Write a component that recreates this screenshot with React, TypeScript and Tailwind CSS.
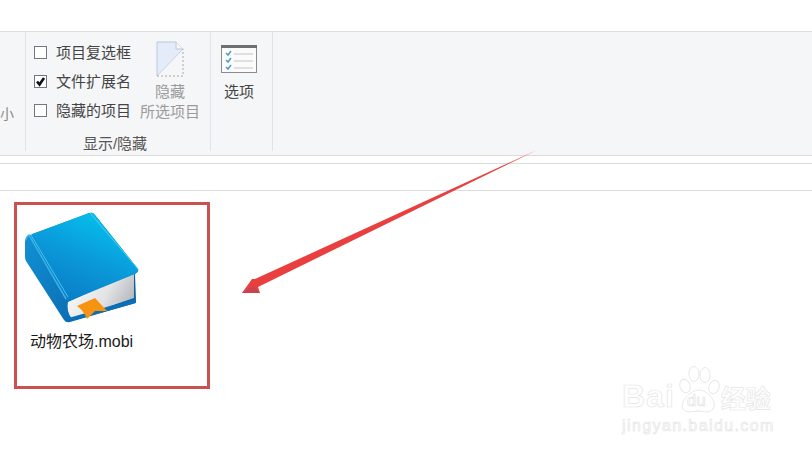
import React from 'react'

const font = { fontFamily: '"Liberation Sans", "Noto Sans CJK SC", sans-serif' }

function CheckRow({ label, checked }: { label: string; checked?: boolean }) {
  return (
    <div className="flex h-[29px] items-center">
      <span className="flex h-[13px] w-[13px] items-center justify-center border border-[#6f7780] bg-white">
        {checked && (
          <svg width="11" height="11" viewBox="0 0 11 11">
            <path d="M2 5.5 L4.5 8.5 L9 2" fill="none" stroke="#111" strokeWidth="2.6" />
          </svg>
        )}
      </span>
      <span className="ml-[9px] whitespace-nowrap text-[15px] leading-none text-[#444]">{label}</span>
    </div>
  )
}

function BookIcon() {
  return (
    <svg width="120" height="120" viewBox="0 0 120 120" className="block">
      <defs>
        <linearGradient id="cover" x1="0.75" y1="0" x2="0.25" y2="1">
          <stop offset="0" stopColor="#05c4ee" />
          <stop offset="0.5" stopColor="#0a9ada" />
          <stop offset="1" stopColor="#0a7bc6" />
        </linearGradient>
        <linearGradient id="spine" x1="0" y1="0" x2="1" y2="0.6">
          <stop offset="0" stopColor="#1296d8" />
          <stop offset="1" stopColor="#0a5fa8" />
        </linearGradient>
        <linearGradient id="pages" x1="0" y1="0.2" x2="1" y2="0.6">
          <stop offset="0" stopColor="#fbfbfb" />
          <stop offset="0.6" stopColor="#e2e3e5" />
          <stop offset="1" stopColor="#b4b6ba" />
        </linearGradient>
      </defs>
      <path d="M3 33 Q3 29 8 26 L67 4 Q71 3 73 6 L116 60 Q117 63 113 65 L114 92 Q114 94 110 95 L48 113 Q44 114 42 111 L4 52 Q3 50 3 47 Z" fill="url(#spine)" />
      <path d="M46 93 L112 63 L112 89 L50 110 Q44 102 46 93 Z" fill="url(#pages)" />
      <path d="M113 90 L114 94 L46 113 L43 110 L50 108 Z" fill="#0a6fb8" />
      <path d="M10 25 L68 4 Q71 3 73 6 L116 60 Q117 63 113 65 L47 92 Q46 93 44 90 Z" fill="url(#cover)" />
      <path d="M4 31 Q4 28 7 26 L44 90" fill="none" stroke="#35b4e6" strokeWidth="1.5" />
      <path d="M9 26 L46 88" fill="none" stroke="#4cc4ee" strokeWidth="1" />
      <path d="M68 4 L116 60" fill="none" stroke="#49d3f2" strokeWidth="1" />
      <path d="M55 97 L73 89 L85 102 L73 102 L65 110 Q62 102 55 97 Z" fill="#f7930e" />
    </svg>
  )
}

export default function App() {
  return (
    <div className="relative h-[453px] w-[812px] overflow-hidden bg-white" style={font}>
      <div className="h-[31px]" />

      {/* ribbon */}
      <div className="flex h-[125px] border-y border-[#dcdcdc] bg-[#f5f6f7]">
        <div className="flex h-[119px] w-[26px] items-end border-r border-[#e1e3e6] pb-[6px]">
          <span className="mb-[24px] text-[14px] leading-none text-[#8a8a8a]">小</span>
        </div>
        <div className="flex h-[119px] w-[185px] flex-col border-r border-[#e1e3e6]">
          <div className="flex">
            <div className="ml-[8px] mt-[6px] flex flex-col">
              <CheckRow label="项目复选框" />
              <CheckRow label="文件扩展名" checked />
              <CheckRow label="隐藏的项目" />
            </div>
            <div className="ml-[9px] mt-[9px] flex flex-col items-center">
              <svg width="28" height="36" viewBox="0 0 28 36" className="block">
                <path d="M1 1 H20 L27 8 V35 H1 Z" fill="#e3ecf8" />
                <path d="M1 35 L27 8 V35 Z" fill="#f5f6f7" />
                <path d="M1 35 V1 H20 L27 8" fill="none" stroke="#bcc8d8" />
                <path d="M1 35 L27 8" fill="none" stroke="#c8d2df" />
                <path d="M1 35 H27 V8" fill="none" stroke="#a8a8a8" strokeDasharray="2 2" />
                <path d="M20 1 V8 H27" fill="#f4f6fa" stroke="#bcc8d8" />
              </svg>
              <span className="mt-[5px] whitespace-nowrap text-[15px] leading-[20px] text-[#9a9a9a]">隐藏</span>
              <span className="whitespace-nowrap text-[15px] leading-[20px] text-[#9a9a9a]">所选项目</span>
            </div>
          </div>
          <div className="mt-[11px] pr-[6px] text-center text-[15px] leading-none text-[#555]">显示/隐藏</div>
        </div>
        <div className="flex h-[119px] w-[62px] flex-col items-center border-r border-[#e1e3e6] pr-[5px] pt-[13px]">
          <svg width="36" height="28" viewBox="0 0 36 28" className="block">
            <rect x="0.5" y="0.5" width="35" height="27" fill="#fbfbfb" stroke="#8c8c8c" />
            <rect x="0" y="0" width="36" height="3" fill="#6f6f6f" />
            <path d="M5 8 L7 10 L10 6 M5 15 L7 17 L10 13 M5 22 L7 24 L10 20" fill="none" stroke="#4f9ec4" strokeWidth="1.5" />
            <path d="M13 9 H32 M13 16 H32 M13 23 H32" stroke="#c4c4c4" />
          </svg>
          <span className="mt-[11px] whitespace-nowrap text-[15px] leading-none text-[#444]">选项</span>
        </div>
      </div>

      {/* address bar */}
      <div className="mt-[7px] h-[28px] border-y border-[#dcdcdc]" />

      {/* file area */}
      <div className="ml-[14px] mt-[11px] h-[187px] w-[196px] border-[3px] border-[#cb5150] px-[5px] pt-[4px]">
        <BookIcon />
        <div className="ml-[8px] mt-[5px] whitespace-nowrap text-[16px] leading-none text-[#1a1a1a]">动物农场.mobi</div>
      </div>

      {/* annotation arrow */}
      <svg className="absolute left-[230px] top-[140px]" width="320" height="165" viewBox="0 0 320 165">
        <path d="M307 10 L25 139 L22 139 L12 153 L30 153 L28 147 Z" fill="#ea3f3f" />
        <path d="M12 153 L22 146 L30 153 Z" fill="#c94450" />
      </svg>

      {/* watermark */}
      <div className="absolute left-[622px] top-[365px] select-none">
        <div className="flex items-end">
          <span className="text-[32px] font-bold leading-none tracking-[1px] text-white [-webkit-text-stroke:0.7px_#e6e6e6]">Bai</span>
          <div className="relative -mb-[3px] ml-[1px] h-[50px] w-[44px]">
            <svg width="44" height="50" viewBox="0 0 44 50" className="block">
              <g fill="#fff" stroke="#e8e8e8">
                <ellipse cx="9" cy="21" rx="5" ry="7" transform="rotate(-20 9 21)" />
                <ellipse cx="18" cy="9" rx="5" ry="7.5" />
                <ellipse cx="29" cy="10" rx="5" ry="7.5" />
                <ellipse cx="38" cy="22" rx="5" ry="7" transform="rotate(20 38 22)" />
                <path d="M23 25 C32 25 42 38 37 44 C33 49 27 46 23 46 C18 46 11 49 7 44 C3 38 14 25 23 25 Z" />
              </g>
            </svg>
            <span className="absolute bottom-[6px] left-[11px] text-[17px] leading-none text-white [-webkit-text-stroke:0.7px_#e4e4e4]">du</span>
          </div>
          <span className="ml-[1px] text-[25px] font-bold leading-none text-white [-webkit-text-stroke:0.7px_#e6e6e6]">经验</span>
        </div>
        <div className="mt-[6px] text-[16px] leading-none tracking-[1.4px] text-white [-webkit-text-stroke:0.7px_#e6e6e6]">jingyan.baidu.com</div>
      </div>
    </div>
  )
}
